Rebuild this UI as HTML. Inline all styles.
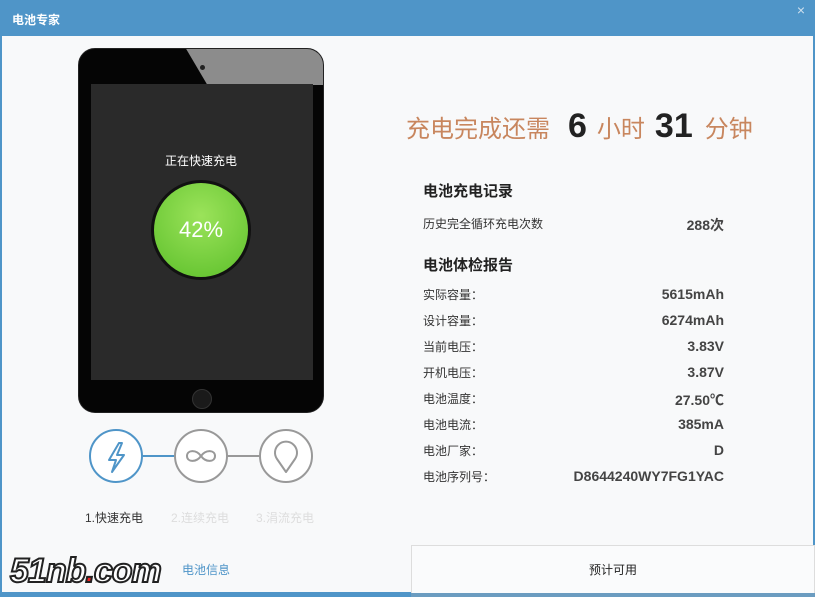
<!DOCTYPE html>
<html><head><meta charset="utf-8"><style>
*{margin:0;padding:0;box-sizing:border-box}
body{width:815px;height:597px;background:#f8f9fa;font-family:"Liberation Sans","Noto Sans CJK SC",sans-serif;position:relative;overflow:hidden}
.t{position:absolute;white-space:nowrap}
.title{position:absolute;left:0;top:0;width:815px;height:36px;background:#4f95c8;color:#fff;font-size:12px;font-weight:bold;padding:11px 0 0 12px}
.row{position:absolute;left:423px;width:301px;font-size:12px;color:#333}
.row b{position:absolute;right:0;top:0;font-size:14px;color:#444}
</style></head><body>
<div style="position:absolute;left:0;top:0;width:2px;height:597px;background:#4f95c8"></div>
<div style="position:absolute;right:0;top:0;width:2px;height:597px;background:#4f95c8"></div>
<div class="title">电池专家<span style="position:absolute;right:10px;top:2px;font-weight:normal;color:#cfe0ee;font-size:14px">×</span></div>
<div style="position:absolute;left:78px;top:48px;width:246px;height:365px;background:#050505;border-radius:17px;overflow:hidden;border:1px solid #222">
 <div style="position:absolute;left:106px;top:-2px;width:160px;height:38px;background:#8c8c8c;clip-path:polygon(0 0,100% 0,100% 100%,14% 100%)"></div>
 <div style="position:absolute;left:121px;top:16px;width:5px;height:5px;border-radius:50%;background:#222"></div>
 <div style="position:absolute;left:12px;top:35px;width:222px;height:296px;background:#2a2a2a"></div>
 <div style="position:absolute;left:113px;top:340px;width:20px;height:20px;border-radius:50%;background:#1a1a1a;border:1px solid #333"></div>
</div>
<div class="t" style="left:165px;top:152px;color:#fff;font-size:12px">正在快速充电</div>
<div style="position:absolute;left:151px;top:180px;width:100px;height:100px;border-radius:50%;background:radial-gradient(circle at 50% 35%,#9be35a,#5cbf2a);border:3px solid #111;color:#fff;font-size:22px;text-align:center;line-height:94px">42%</div>
<div style="position:absolute;left:142px;top:455px;width:34px;height:2px;background:#4f95c8"></div>
<div style="position:absolute;left:227px;top:455px;width:34px;height:2px;background:#999"></div>
<svg style="position:absolute;left:89px;top:429px" width="56" height="56"><circle cx="27" cy="27" r="26" fill="#fff" stroke="#4f95c8" stroke-width="2"/><path d="M30 14 L20 31 L27 31 L23 43 L35 26 L28 26 L33 14 Z" fill="none" stroke="#4f95c8" stroke-width="2" stroke-linejoin="round"/></svg>
<svg style="position:absolute;left:174px;top:429px" width="56" height="56"><circle cx="27" cy="27" r="26" fill="#fff" stroke="#999" stroke-width="2"/><path d="M27 27 C22 20 13 21 13 27 C13 33 22 34 27 27 C32 20 41 21 41 27 C41 33 32 34 27 27Z" fill="none" stroke="#999" stroke-width="2"/></svg>
<svg style="position:absolute;left:259px;top:429px" width="56" height="56"><circle cx="27" cy="27" r="26" fill="#fff" stroke="#999" stroke-width="2"/><path d="M27 43 L18 30 A11 11 0 1 1 36 30 Z" fill="none" stroke="#999" stroke-width="2" stroke-linejoin="round"/></svg>
<div class="t" style="left:85px;top:509px;font-size:12px;color:#333">1.快速充电</div>
<div class="t" style="left:171px;top:509px;font-size:12px;color:#ddd">2.连续充电</div>
<div class="t" style="left:256px;top:509px;font-size:12px;color:#ddd">3.涓流充电</div>
<div class="t" style="left:182px;top:561px;font-size:12px;color:#4f95c8">电池信息</div>
<div class="t" style="left:10px;top:552px;font-size:34px;font-weight:bold;font-style:italic;color:#fff;-webkit-text-stroke:2px #222;letter-spacing:-1px">51nb<span style="color:#e22">.</span>com</div>
<div style="position:absolute;left:411px;top:545px;width:404px;height:48px;border:1px solid #ddd;border-bottom:none;background:#fafbfc;font-size:12px;text-align:center;line-height:48px;color:#222">预计可用</div>
<div style="position:absolute;left:0;top:592px;width:411px;height:5px;background:#4f95c8"></div>
<div style="position:absolute;left:411px;top:593px;width:404px;height:4px;background:#6b9cc0"></div>
<div class="t" style="left:406px;top:107px;font-size:24px;color:#c8865e">充电完成还需<b style="color:#222;font-size:34px;margin:0 10px 0 18px">6</b>小时<b style="color:#222;font-size:34px;margin:0 12px 0 10px">31</b>分钟</div>
<div class="t" style="left:423px;top:180px;font-size:15px;font-weight:bold;color:#222">电池充电记录</div>
<div class="row" style="top:215px">历史完全循环充电次数<b>288次</b></div>
<div class="t" style="left:423px;top:254px;font-size:15px;font-weight:bold;color:#222">电池体检报告</div>
<div class="row" style="top:286px">实际容量：<b>5615mAh</b></div>
<div class="row" style="top:312px">设计容量：<b>6274mAh</b></div>
<div class="row" style="top:338px">当前电压：<b>3.83V</b></div>
<div class="row" style="top:364px">开机电压：<b>3.87V</b></div>
<div class="row" style="top:390px">电池温度：<b>27.50℃</b></div>
<div class="row" style="top:416px">电池电流：<b>385mA</b></div>
<div class="row" style="top:442px">电池厂家：<b>D</b></div>
<div class="row" style="top:468px">电池序列号：<b>D8644240WY7FG1YAC</b></div>
</body></html>
